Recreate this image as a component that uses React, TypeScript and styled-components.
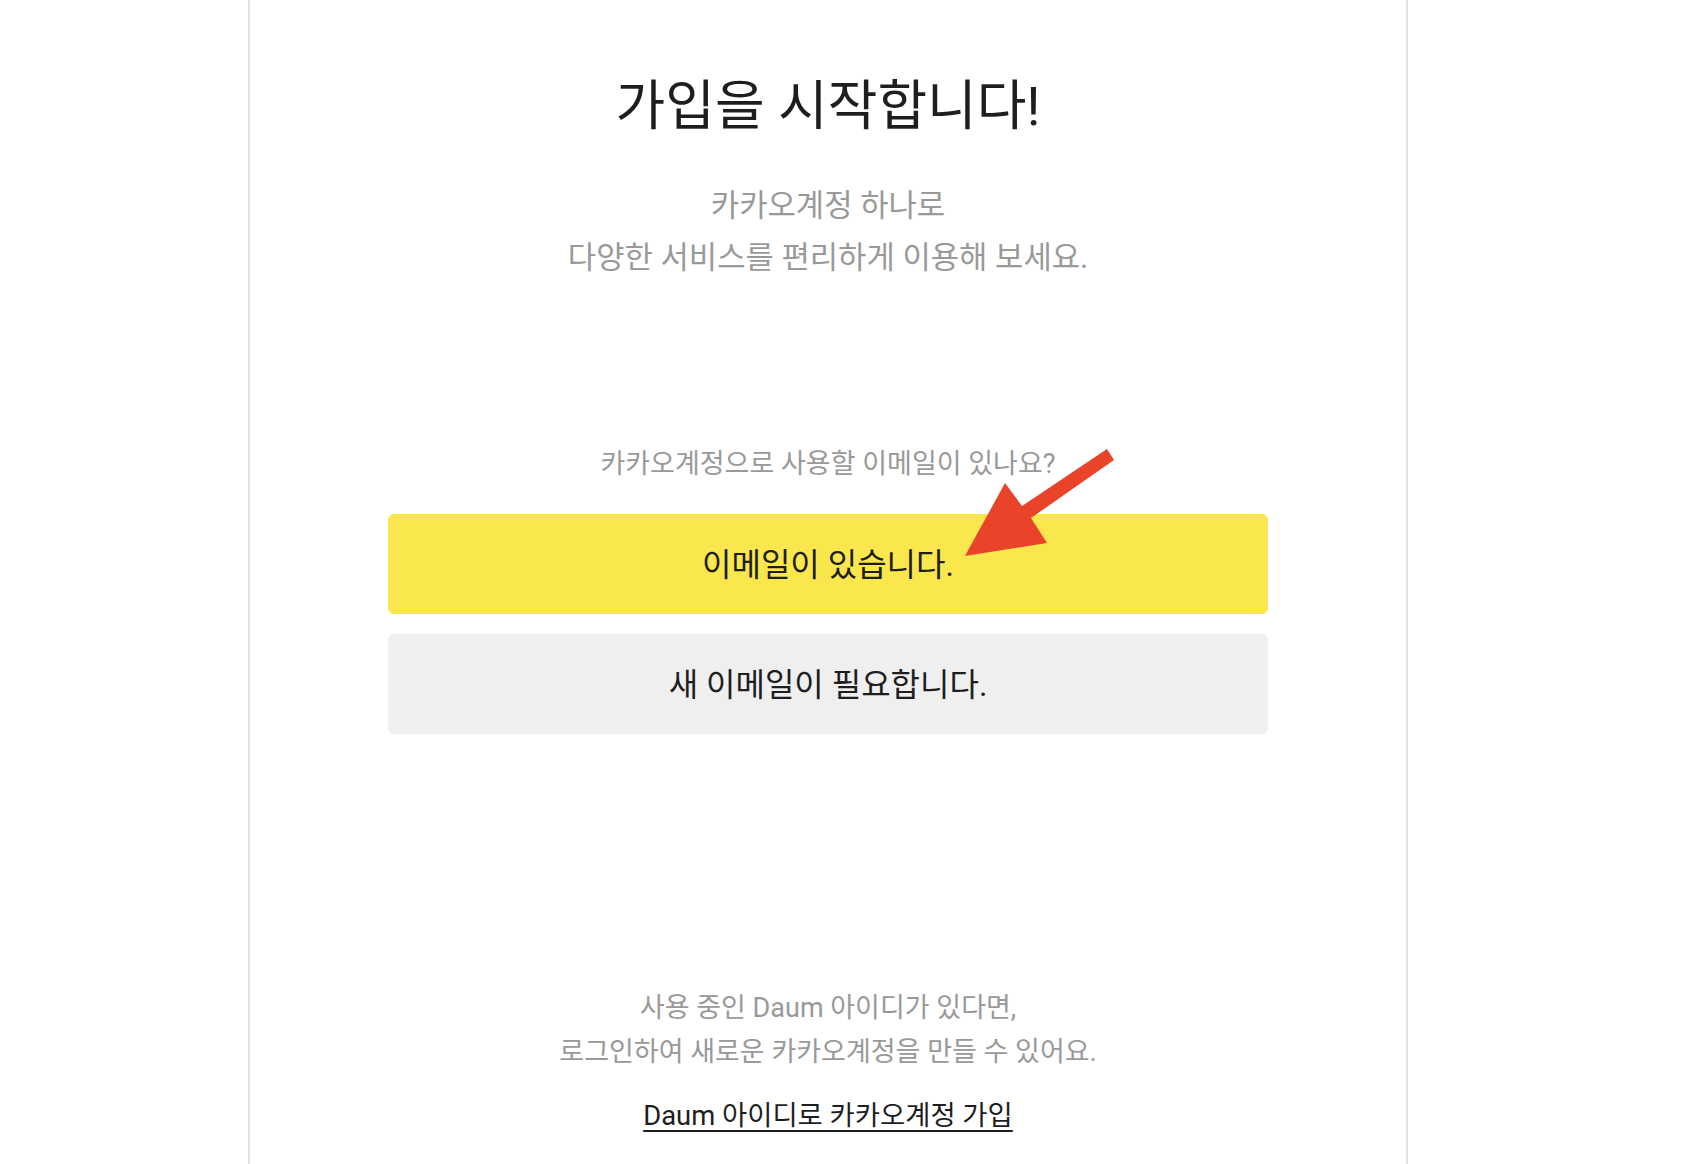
import React from "react";
import styled, { createGlobalStyle } from "styled-components";

const Global = createGlobalStyle`
  html, body { margin: 0; padding: 0; background: #fff; }
  body { font-family: Roboto, "Noto Sans CJK KR", sans-serif; color: #1e1e1e; }
  * { box-sizing: border-box; }
`;

const Page = styled.div`
  position: relative;
  width: 1698px;
  height: 1164px;
  overflow: hidden;
`;

const Column = styled.main`
  margin-left: 248px;
  width: 1160px;
  min-height: 1164px;
  border-left: 2px solid #e3e3e3;
  border-right: 2px solid #e3e3e3;
  padding-top: 77px;
  display: flex;
  flex-direction: column;
  align-items: center;
  text-align: center;
`;

const Title = styled.h1`
  margin: 0;
  font-size: 54px;
  line-height: 60px;
  font-weight: 400;
  color: #1e1e1e;
`;

const Sub = styled.p`
  margin: 43px 0 0;
  font-size: 30.8px;
  line-height: 52px;
  color: #999;
`;

const Question = styled.p`
  margin: 162px 0 0;
  font-size: 27px;
  line-height: 36px;
  color: #999;
`;

const Buttons = styled.div`
  margin-top: 32px;
  width: 880px;
  display: flex;
  flex-direction: column;
  gap: 20px;
`;

const Button = styled.button<{ $primary?: boolean }>`
  height: 100px;
  width: 100%;
  padding: 0 0 4px;
  border: none;
  border-radius: 6px;
  background: ${(p) => (p.$primary ? "#fae64d" : "#efefef")};
  font-family: Roboto, "Noto Sans CJK KR", sans-serif;
  font-size: 32px;
  color: #1e1e1e;
  cursor: pointer;
`;

const Footer = styled.p`
  margin: 252px 0 0;
  font-size: 27px;
  line-height: 44px;
  color: #999;
`;

const FooterLink = styled.a`
  margin-top: 22px;
  font-size: 27.4px;
  line-height: 40px;
  color: #1e1e1e;
  text-decoration: underline;
  text-decoration-thickness: 2px;
  text-underline-offset: 5px;
`;

const Arrow = styled.svg`
  position: absolute;
  left: 960px;
  top: 445px;
  width: 160px;
  height: 115px;
  pointer-events: none;
`;

export default function App() {
  return (
    <Page>
      <Global />
      <Column>
        <Title>가입을 시작합니다!</Title>
        <Sub>
          카카오계정 하나로
          <br />
          다양한 서비스를 편리하게 이용해 보세요.
        </Sub>
        <Question>카카오계정으로 사용할 이메일이 있나요?</Question>
        <Buttons>
          <Button $primary>이메일이 있습니다.</Button>
          <Button>새 이메일이 필요합니다.</Button>
        </Buttons>
        <Footer>
          사용 중인 Daum 아이디가 있다면,
          <br />
          로그인하여 새로운 카카오계정을 만들 수 있어요.
        </Footer>
        <FooterLink href="#">Daum 아이디로 카카오계정 가입</FooterLink>
      </Column>
      <Arrow viewBox="0 0 160 115">
        <polygon
          points="147,4 154,15 71,73 87,98 5,111 45,38 62,61"
          fill="#e9432a"
        />
      </Arrow>
    </Page>
  );
}
